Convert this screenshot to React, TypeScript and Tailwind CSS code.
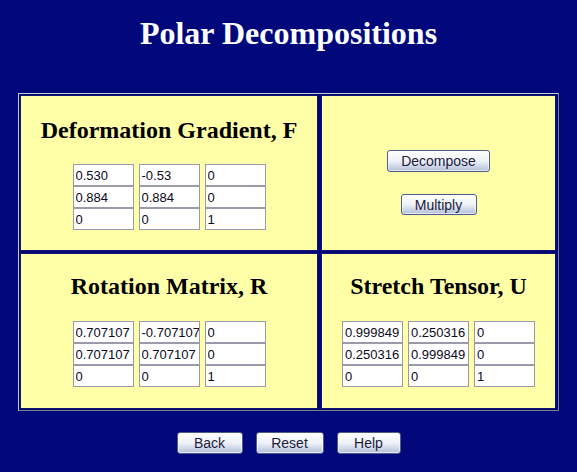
import React from "react";

const serif = { fontFamily: '"Liberation Serif", "Times New Roman", serif' };

function Btn({ label, w, h = "h-[22px]" }: { label: string; w: string; h?: string }) {
  return (
    <button
      type="button"
      className={`${w} ${h} rounded-[3px] border border-[#4b5d8c] bg-gradient-to-b from-white via-[#eef1f8] to-[#b3bfd9] text-[14px] leading-none text-[#1c1c3c] shadow-[inset_0_0_0_1px_rgba(255,255,255,0.6)]`}
      style={{ fontFamily: '"Liberation Sans", Arial, sans-serif' }}
    >
      {label}
    </button>
  );
}

function Matrix({ values }: { values: string[] }) {
  return (
    <div className="grid grid-cols-[61px_61px_61px] gap-x-[5px]">
      {values.map((v, i) => (
        <input
          key={i}
          defaultValue={v}
          className="h-[22px] w-[61px] border border-[#9a9aaa] bg-white p-0 pl-[2px] text-[13px] text-[#0a0a20] outline-none"
          style={{ fontFamily: '"Liberation Sans", Arial, sans-serif' }}
        />
      ))}
    </div>
  );
}

function Section({ title, values, pad }: { title: string; values: string[]; pad: "top" | "bottom" }) {
  return (
    <div
      className={`flex flex-col items-center border border-[#14146a] bg-[#ffffa8] ${pad === "top" ? "pt-[20px]" : "pt-[18px]"}`}
    >
      <h2 className="text-[24px] font-bold leading-[28px] text-black" style={serif}>
        {title}
      </h2>
      <div className={pad === "top" ? "mt-[20px]" : "mt-[21px]"}>
        <Matrix values={values} />
      </div>
    </div>
  );
}

export default function App() {
  return (
    <div className="h-[472px] w-[577px] overflow-hidden bg-[#00087c] pt-[17px]">
      <h1 className="text-center text-[32px] font-bold leading-[32px] text-white" style={serif}>
        Polar Decompositions
      </h1>

      <div className="mx-auto mt-[44px] grid w-[541px] grid-cols-[298px_235px] grid-rows-[156px_156px] gap-x-[3px] gap-y-[2px] border border-t-[#c8c8d0] border-l-[#c8c8d0] border-r-[#808080] border-b-[#808080] p-[1px]">
        <Section
          title="Deformation Gradient, F"
          values={["0.530", "-0.53", "0", "0.884", "0.884", "0", "0", "0", "1"]}
          pad="top"
        />
        <div className="flex flex-col items-center gap-[22px] border border-[#14146a] bg-[#ffffa8] pt-[54px]">
          <Btn label="Decompose" w="w-[103px]" />
          <Btn label="Multiply" w="w-[76px]" h="h-[21px]" />
        </div>
        <Section
          title="Rotation Matrix, R"
          values={["0.707107", "-0.707107", "0", "0.707107", "0.707107", "0", "0", "0", "1"]}
          pad="bottom"
        />
        <Section
          title="Stretch Tensor, U"
          values={["0.999849", "0.250316", "0", "0.250316", "0.999849", "0", "0", "0", "1"]}
          pad="bottom"
        />
      </div>

      <div className="mt-[21px] flex justify-center gap-[13px]">
        <Btn label="Back" w="w-[66px]" />
        <Btn label="Reset" w="w-[68px]" />
        <Btn label="Help" w="w-[64px]" />
      </div>
    </div>
  );
}
